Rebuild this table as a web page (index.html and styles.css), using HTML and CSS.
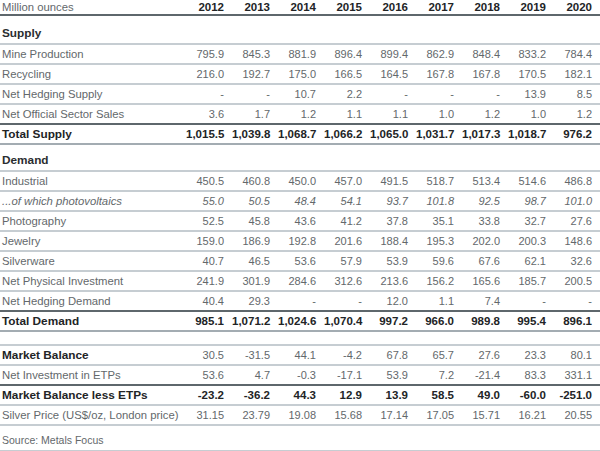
FILE: index.html
```html
<!DOCTYPE html>
<html lang="en">
<head>
<meta charset="utf-8">
<title>Silver supply and demand</title>
<link rel="stylesheet" href="styles.css">
</head>
<body>
<table class="tbl">
  <colgroup>
    <col class="c-label">
    <col class="c-year"><col class="c-year"><col class="c-year"><col class="c-year"><col class="c-year"><col class="c-year"><col class="c-year"><col class="c-year"><col class="c-year">
  </colgroup>
  <thead>
    <tr class="head dark">
      <th class="lbl">Million ounces</th>
      <th>2012</th><th>2013</th><th>2014</th><th>2015</th><th>2016</th><th>2017</th><th>2018</th><th>2019</th><th>2020</th>
    </tr>
  </thead>
  <tbody>
    <tr class="section s-supply"><td class="lbl" colspan="10">Supply</td></tr>
    <tr><td class="lbl">Mine Production</td><td>795.9</td><td>845.3</td><td>881.9</td><td>896.4</td><td>899.4</td><td>862.9</td><td>848.4</td><td>833.2</td><td>784.4</td></tr>
    <tr><td class="lbl">Recycling</td><td>216.0</td><td>192.7</td><td>175.0</td><td>166.5</td><td>164.5</td><td>167.8</td><td>167.8</td><td>170.5</td><td>182.1</td></tr>
    <tr><td class="lbl">Net Hedging Supply</td><td>-</td><td>-</td><td>10.7</td><td>2.2</td><td>-</td><td>-</td><td>-</td><td>13.9</td><td>8.5</td></tr>
    <tr class="dark"><td class="lbl">Net Official Sector Sales</td><td>3.6</td><td>1.7</td><td>1.2</td><td>1.1</td><td>1.1</td><td>1.0</td><td>1.2</td><td>1.0</td><td>1.2</td></tr>
    <tr class="total mid"><td class="lbl">Total Supply</td><td>1,015.5</td><td>1,039.8</td><td>1,068.7</td><td>1,066.2</td><td>1,065.0</td><td>1,031.7</td><td>1,017.3</td><td>1,018.7</td><td>976.2</td></tr>

    <tr class="section s-demand"><td class="lbl" colspan="10">Demand</td></tr>
    <tr><td class="lbl">Industrial</td><td>450.5</td><td>460.8</td><td>450.0</td><td>457.0</td><td>491.5</td><td>518.7</td><td>513.4</td><td>514.6</td><td>486.8</td></tr>
    <tr class="ital"><td class="lbl">...of which photovoltaics</td><td>55.0</td><td>50.5</td><td>48.4</td><td>54.1</td><td>93.7</td><td>101.8</td><td>92.5</td><td>98.7</td><td>101.0</td></tr>
    <tr><td class="lbl">Photography</td><td>52.5</td><td>45.8</td><td>43.6</td><td>41.2</td><td>37.8</td><td>35.1</td><td>33.8</td><td>32.7</td><td>27.6</td></tr>
    <tr><td class="lbl">Jewelry</td><td>159.0</td><td>186.9</td><td>192.8</td><td>201.6</td><td>188.4</td><td>195.3</td><td>202.0</td><td>200.3</td><td>148.6</td></tr>
    <tr><td class="lbl">Silverware</td><td>40.7</td><td>46.5</td><td>53.6</td><td>57.9</td><td>53.9</td><td>59.6</td><td>67.6</td><td>62.1</td><td>32.6</td></tr>
    <tr><td class="lbl">Net Physical Investment</td><td>241.9</td><td>301.9</td><td>284.6</td><td>312.6</td><td>213.6</td><td>156.2</td><td>165.6</td><td>185.7</td><td>200.5</td></tr>
    <tr class="dark"><td class="lbl">Net Hedging Demand</td><td>40.4</td><td>29.3</td><td>-</td><td>-</td><td>12.0</td><td>1.1</td><td>7.4</td><td>-</td><td>-</td></tr>
    <tr class="total mid"><td class="lbl">Total Demand</td><td>985.1</td><td>1,071.2</td><td>1,024.6</td><td>1,070.4</td><td>997.2</td><td>966.0</td><td>989.8</td><td>995.4</td><td>896.1</td></tr>

    <tr class="spacer"><td colspan="10"></td></tr>
    <tr class="total"><td class="lbl">Market Balance</td><td class="reg">30.5</td><td class="reg">-31.5</td><td class="reg">44.1</td><td class="reg">-4.2</td><td class="reg">67.8</td><td class="reg">65.7</td><td class="reg">27.6</td><td class="reg">23.3</td><td class="reg">80.1</td></tr>
    <tr class="dark"><td class="lbl">Net Investment in ETPs</td><td>53.6</td><td>4.7</td><td>-0.3</td><td>-17.1</td><td>53.9</td><td>7.2</td><td>-21.4</td><td>83.3</td><td>331.1</td></tr>
    <tr class="total"><td class="lbl">Market Balance less ETPs</td><td>-23.2</td><td>-36.2</td><td>44.3</td><td>12.9</td><td>13.9</td><td>58.5</td><td>49.0</td><td>-60.0</td><td>-251.0</td></tr>
    <tr><td class="lbl">Silver Price (US$/oz, London price)</td><td>31.15</td><td>23.79</td><td>19.08</td><td>15.68</td><td>17.14</td><td>17.05</td><td>15.71</td><td>16.21</td><td>20.55</td></tr>
    <tr class="source"><td class="lbl" colspan="10">Source: Metals Focus</td></tr>
  </tbody>
</table>
</body>
</html>
```

FILE: styles.css
```css
html, body {
  margin: 0;
  padding: 0;
  background: #ffffff;
}

body {
  font-family: "Liberation Sans", Arial, sans-serif;
  font-size: 11px;
  color: #63686b;
}

.tbl {
  width: 600px;
  table-layout: fixed;
  border-collapse: separate;
  border-spacing: 0;
}

.c-label { width: 186px; }
.c-year { width: 46px; }

.tbl th,
.tbl td {
  padding: 0 8px 0 0;
  text-align: right;
  vertical-align: middle;
  line-height: 13px;
  white-space: nowrap;
  border-bottom: 2px solid #c6cdd2;
  font-weight: 400;
}

.tbl .lbl {
  text-align: left;
  padding-left: 2px;
  padding-right: 0;
  font-size: 11.3px;
}

.tbl tr { height: 20px; }

/* header */
.tbl tr.head { height: 15px; }
.tbl tr.head th {
  vertical-align: top;
  padding-top: 1px;
  font-weight: 700;
  color: #222426;
  font-size: 11.5px;
}
.tbl tr.head th.lbl {
  font-weight: 400;
  color: #63686b;
  font-size: 11.3px;
}

/* section titles */
.tbl tr.section td {
  vertical-align: bottom;
  padding-bottom: 3px;
  font-weight: 700;
  color: #2a2d30;
  font-size: 11.8px;
}
.tbl tr.s-supply { height: 29px; }
.tbl tr.s-demand { height: 27px; }

/* border weights */
.tbl tr.dark > th,
.tbl tr.dark > td {
  border-bottom-color: #5e676c;
}
.tbl tr.mid > td {
  border-bottom-color: #a3acb2;
}

/* totals */
.tbl tr.total td {
  font-weight: 700;
  color: #222426;
  font-size: 11.5px;
}
.tbl tr.total td.lbl {
  font-size: 11.8px;
}
.tbl tr.total td.reg {
  font-weight: 400;
  color: #63686b;
  font-size: 11px;
}

.tbl tr.ital td {
  font-style: italic;
}

.tbl tr.spacer { height: 14px; }
.tbl tr.spacer td { padding: 0; }

.tbl tr.source { height: 26px; }
.tbl tr.source td {
  vertical-align: bottom;
  padding-bottom: 3px;
  font-size: 10.5px;
  border-bottom-color: #c6cdd2;
}
```
